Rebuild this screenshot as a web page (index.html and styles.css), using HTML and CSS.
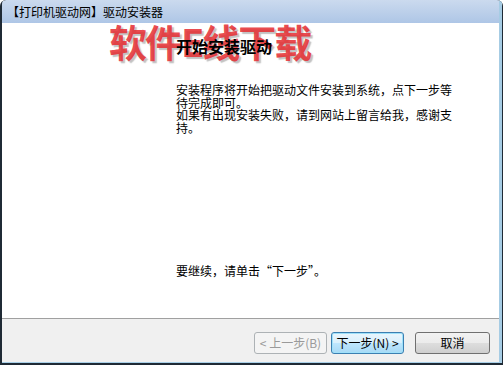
FILE: index.html
```html
<!DOCTYPE html>
<html lang="zh-CN">
<head>
<meta charset="UTF-8">
<title>【打印机驱动网】驱动安装器</title>
<link rel="stylesheet" href="styles.css">
</head>
<body>
<div class="window">
  <div class="frame">
    <div class="titlebar">
      <span class="title">【打印机驱动网】驱动安装器</span>
    </div>
    <div class="content">
      <div class="watermark">软件E线下载</div>
      <h1 class="heading">开始安装驱动</h1>
      <p class="intro">安装程序将开始把驱动文件安装到系统，点下一步等待完成即可。<br>如果有出现安装失败，请到网站上留言给我，感谢支持。</p>
      <p class="continue">要继续，请单击“下一步”。</p>
    </div>
    <div class="buttons">
      <button class="btn btn-disabled" disabled>&lt; 上一步(B)</button>
      <button class="btn btn-default">下一步(N) &gt;</button>
      <button class="btn btn-cancel">取消</button>
    </div>
  </div>
</div>
</body>
</html>
```

FILE: styles.css
```css
html, body {
  margin: 0;
  padding: 0;
  background: #fff;
}
body {
  font-family: "Noto Sans CJK SC", "Liberation Sans", sans-serif;
  font-size: 12px;
  color: #000;
}
.window {
  width: 503px;
  height: 365px;
  box-sizing: border-box;
  background: #1f2a35;
  padding: 0 1px 2px 2px;
  border-top-left-radius: 6px;
  border-top-right-radius: 6px;
  overflow: hidden;
}
.frame {
  height: 100%;
  box-sizing: border-box;
  display: flex;
  flex-direction: column;
  border-right: 3px solid #a6cce4;
  border-bottom: 1px solid #a9d0e8;
}
.titlebar {
  height: 23px;
  flex: none;
  background: linear-gradient(#cbdaee, #aec6e6);
  display: flex;
  align-items: center;
  padding-left: 5px;
  border-top-left-radius: 4px;
}
.title {
  font-size: 12px;
  line-height: 14px;
  color: #000;
}
.content {
  position: relative;
  flex: 1;
  background: #fff;
  border-bottom: 1px solid #a0a0a0;
  padding: 13px 0 41px 174px;
  display: flex;
  flex-direction: column;
}
.watermark {
  position: absolute;
  left: 107px;
  top: -6px;
  font-size: 38px;
  font-weight: bold;
  line-height: 48px;
  letter-spacing: -2px;
  color: rgba(230, 44, 48, 0.85);
  text-shadow: 2px 2px 1px rgba(80, 80, 80, 0.35);
}
.heading {
  position: relative;
  margin: 0;
  font-size: 16px;
  line-height: 20px;
  font-weight: bold;
}
.intro {
  width: 282px;
  margin: 28px 0 0;
  line-height: 12.5px;
}
.continue {
  margin: auto 0 0;
  line-height: 13px;
}
.buttons {
  flex: none;
  height: 43px;
  box-sizing: border-box;
  background: #f0f0f0;
  display: flex;
  justify-content: flex-end;
  align-items: flex-start;
  padding: 13px 9px 0 0;
}
.btn {
  height: 22px;
  width: 73px;
  padding: 0;
  font-family: inherit;
  font-size: 12px;
  line-height: 18px;
  border-radius: 3px;
  border: 1px solid #707070;
  color: #000;
  background: linear-gradient(#f2f2f2 0%, #ebebeb 50%, #dddddd 51%, #cfcfcf 100%);
}
.btn-disabled {
  border-color: #adb2b5;
  background: #f4f4f4;
  color: #9a9a9a;
}
.btn-default {
  margin-left: 4px;
  border-color: #3c7fb1;
  box-shadow: inset 0 0 0 1px #9fe1fa;
  background: linear-gradient(#eaf6fd 0%, #d9f0fc 50%, #bee6fd 51%, #a7d9f5 100%);
}
.btn-cancel {
  width: 75px;
  margin-left: 11px;
}
```
